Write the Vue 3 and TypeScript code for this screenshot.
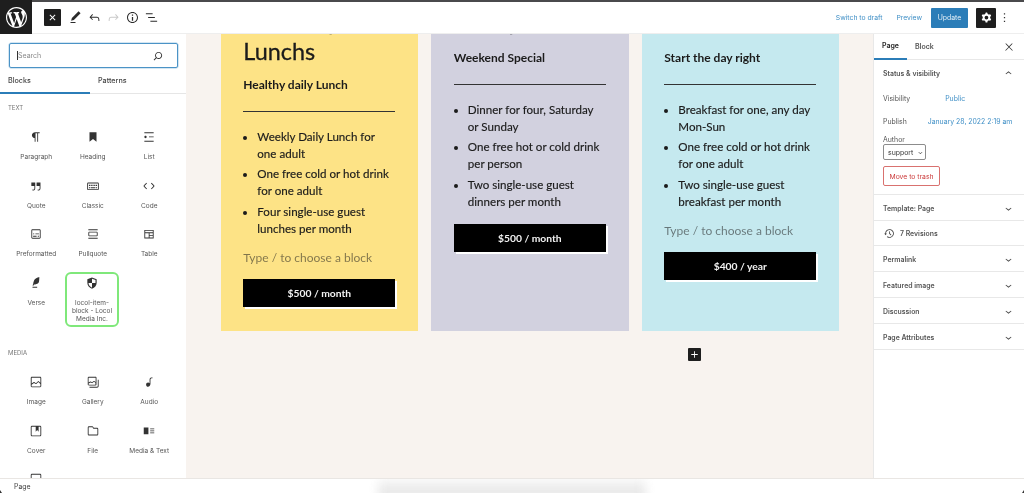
<template>
  <div class="editor">
    <header class="topbar">
      <div class="logo">
        <svg viewBox="0 0 20 20" width="21" height="21"><path fill="#fff" :d="icons.wp" /></svg>
      </div>
      <div class="tools">
        <button class="toggle">
          <svg viewBox="0 0 24 24" width="15" height="15"><path fill="#fff" :d="icons.closeSmall" /></svg>
        </button>
        <svg v-for="t in toolIcons" :key="t.d" viewBox="0 0 24 24" width="15" height="15" class="tool" :class="{ off: t.off }"><path :d="t.d" /></svg>
      </div>
      <div class="actions">
        <a class="link draft">Switch to draft</a>
        <a class="link preview">Preview</a>
        <button class="update">Update</button>
        <button class="settings">
          <svg viewBox="0 0 24 24" width="15" height="15"><path fill="#fff" fill-rule="evenodd" :d="icons.cog" /></svg>
        </button>
        <svg viewBox="0 0 24 24" width="15" height="15" class="kebab"><path :d="icons.kebab" /></svg>
      </div>
    </header>

    <div class="body">
      <aside class="inserter">
        <div class="search">
          <span class="caret"></span>
          <span class="search-text">Search</span>
          <svg viewBox="0 0 24 24" width="14" height="14"><path fill="#333" :d="icons.search" /></svg>
        </div>
        <div class="ins-tabs">
          <span class="ins-tab active">Blocks</span>
          <span class="ins-tab">Patterns</span>
        </div>
        <section v-for="group in blockGroups" :key="group.title">
          <h3 class="group-title">{{ group.title }}</h3>
          <div class="block-grid">
            <div v-for="b in group.items" :key="b.label" class="block" :class="{ picked: b.picked }">
              <svg viewBox="0 0 24 24" width="14" height="14" class="block-icon"><path fill-rule="evenodd" :d="b.icon" /></svg>
              <span class="block-label">{{ b.label }}</span>
            </div>
          </div>
        </section>
      </aside>

      <main class="canvas">
        <div class="cards">
          <article v-for="plan in plans" :key="plan.sub" class="card" :class="plan.tone">
            <h2 class="plan-title">{{ plan.title }}</h2>
            <p class="plan-sub">{{ plan.sub }}</p>
            <hr class="rule" />
            <ul class="perks">
              <li v-for="perk in plan.perks" :key="perk">{{ perk }}</li>
            </ul>
            <p v-if="plan.hint" class="hint">Type / to choose a block</p>
            <div class="price">{{ plan.price }}</div>
          </article>
        </div>
        <button class="appender">
          <svg viewBox="0 0 24 24" width="13" height="13"><path fill="#fff" :d="icons.plus" /></svg>
        </button>
      </main>

      <aside class="sidebar">
        <div class="side-tabs">
          <span class="side-tab active">Page</span>
          <span class="side-tab">Block</span>
          <svg viewBox="0 0 24 24" width="12" height="12" class="side-close"><path :d="icons.close" /></svg>
        </div>
        <section class="status">
          <div class="panel-head flush">
            <span>Status &amp; visibility</span>
            <svg viewBox="0 0 24 24" width="13" height="13"><path :d="icons.chevronUp" /></svg>
          </div>
          <div class="row visibility"><span>Visibility</span><a class="val public">Public</a></div>
          <div class="row publish"><span>Publish</span><a class="val date">January 28, 2022 2:19 am</a></div>
          <div class="author">Author</div>
          <div class="select">support
            <svg viewBox="0 0 24 24" width="9" height="9"><path :d="icons.chevronDown" /></svg>
          </div>
          <button class="trash">Move to trash</button>
        </section>
        <div class="panel-head template">
          <span>Template: Page</span>
          <svg viewBox="0 0 24 24" width="13" height="13"><path :d="icons.chevronDown" /></svg>
        </div>
        <div class="revisions">
          <svg viewBox="0 0 24 24" width="13" height="13"><path :d="icons.backup" /></svg>
          <span>7 Revisions</span>
        </div>
        <div v-for="p in panels" :key="p" class="panel-head">
          <span>{{ p }}</span>
          <svg viewBox="0 0 24 24" width="13" height="13"><path :d="icons.chevronDown" /></svg>
        </div>
      </aside>
    </div>

    <footer class="crumbs">
      <span>Page</span>
      <i class="smudge"></i>
      <i class="corner left"></i>
      <i class="corner right"></i>
    </footer>
  </div>
</template>

<script setup lang="ts">
interface Block {
  label: string
  icon: string
  picked?: boolean
}

interface Plan {
  title: string
  sub: string
  perks: string[]
  price: string
  tone: string
  hint?: boolean
}

const icons = {
  wp: 'M20 10c0-5.51-4.49-10-10-10C4.48 0 0 4.49 0 10c0 5.52 4.48 10 10 10 5.51 0 10-4.48 10-10zM7.78 15.37L4.37 6.22c.55-.02 1.17-.08 1.17-.08.5-.06.44-1.13-.06-1.11 0 0-1.45.11-2.37.11-.18 0-.37 0-.58-.01C4.12 2.69 6.87 1.11 10 1.11c2.33 0 4.45.87 6.05 2.34-.68-.11-1.65.39-1.65 1.58 0 .74.45 1.36.9 2.1.35.61.55 1.36.55 2.46 0 1.49-1.4 5-1.4 5l-3.03-8.37c.54-.02.82-.17.82-.17.5-.05.44-1.25-.06-1.22 0 0-1.44.12-2.38.12-.87 0-2.33-.12-2.33-.12-.5-.03-.56 1.2-.06 1.22l.92.08 1.26 3.41zM17.41 10c.24-.64.74-1.87.43-4.25.7 1.29 1.05 2.71 1.05 4.25 0 3.29-1.73 6.24-4.4 7.78.97-2.59 1.94-5.2 2.92-7.78zM6.1 18.09C3.12 16.65 1.11 13.53 1.11 10c0-1.3.23-2.48.72-3.59C3.25 10.3 4.67 14.2 6.1 18.09zm4.03-6.63l2.58 6.98c-.86.29-1.76.45-2.71.45-.79 0-1.57-.11-2.29-.33.81-2.38 1.62-4.74 2.42-7.1z',
  closeSmall: 'M12 13.06l3.712 3.713 1.061-1.06L13.061 12l3.712-3.712-1.06-1.06L12 10.938 8.288 7.227l-1.061 1.06L10.939 12l-3.712 3.712 1.06 1.061L12 13.061z',
  close: 'M13 11.8l6.1-6.3-1-1-6.1 6.2-6.1-6.2-1 1 6.1 6.3-6.5 6.7 1 1 6.5-6.6 6.5 6.6 1-1z',
  cog: 'M10.289 4.836A1 1 0 0 1 11.275 4h1.306a1 1 0 0 1 .987.836l.244 1.466c.787.26 1.503.679 2.108 1.218l1.393-.522a1 1 0 0 1 1.216.437l.653 1.13a1 1 0 0 1-.23 1.273l-1.148.944a6.025 6.025 0 0 1 0 2.435l1.149.946a1 1 0 0 1 .23 1.272l-.653 1.13a1 1 0 0 1-1.216.437l-1.394-.522c-.605.54-1.32.958-2.108 1.218l-.244 1.466a1 1 0 0 1-.987.836h-1.306a1 1 0 0 1-.986-.836l-.244-1.466a5.995 5.995 0 0 1-2.108-1.218l-1.394.522a1 1 0 0 1-1.217-.436l-.653-1.131a1 1 0 0 1 .23-1.272l1.149-.946a6.026 6.026 0 0 1 0-2.435l-1.148-.944a1 1 0 0 1-.23-1.272l.653-1.131a1 1 0 0 1 1.217-.437l1.393.522a5.994 5.994 0 0 1 2.108-1.218l.244-1.466ZM14.929 12a3 3 0 1 1-6 0 3 3 0 0 1 6 0Z',
  kebab: 'M13 19h-2v-2h2v2zm0-6h-2v-2h2v2zm0-6h-2V5h2v2z',
  search: 'M13 5c-3.3 0-6 2.7-6 6 0 1.4.5 2.7 1.3 3.7l-3.8 3.8 1.1 1.1 3.8-3.8c1 .8 2.3 1.3 3.7 1.3 3.3 0 6-2.7 6-6S16.3 5 13 5zm0 10.5c-2.5 0-4.5-2-4.5-4.5s2-4.5 4.5-4.5 4.5 2 4.5 4.5-2 4.5-4.5 4.5z',
  plus: 'M18 11.2h-5.2V6h-1.6v5.2H6v1.6h5.2V18h1.6v-5.2H18z',
  chevronDown: 'M17.5 11.6L12 16l-5.5-4.4.9-1.2L12 14l4.5-3.6 1 1.2z',
  chevronUp: 'M6.5 12.4L12 8l5.5 4.4-.9 1.2L12 10l-4.5 3.6-1-1.2z',
  backup: 'M5.5 12h1.75l-2.5 3-2.5-3H4a8 8 0 113.134 6.35l.907-1.194A6.5 6.5 0 105.5 12zm9.53 1.97l-2.28-2.28V8.5a.75.75 0 00-1.5 0V12a.747.747 0 00.218.529l1.282-.84-1.28.842 2.5 2.5a.75.75 0 101.06-1.061z',
}

const toolIcons = [
  { d: 'M20.1 5.1L16.9 2 6.2 12.7l-1.3 4.4 4.5-1.3L20.1 5.1zM4 20.8h8v-1.5H4v1.5z' },
  { d: 'M18.3 11.7c-.6-.6-1.4-.9-2.3-.9H6.7l2.9-3.3-1.1-1-4.5 5L8.5 16l1-1-2.7-2.7H16c.5 0 .9.2 1.3.5 1 1 1 3.4 1 4.5v.3h1.5v-.2c0-1.5 0-4.3-1.5-5.7z' },
  { d: 'M15.6 6.5l-1.1 1 2.9 3.3H8c-.9 0-1.7.3-2.3.9-1.4 1.5-1.4 4.2-1.4 5.6v.2h1.5v-.3c0-1.1 0-3.5 1-4.5.3-.3.7-.5 1.3-.5h9.2L14.5 15l1.1 1.1 4.6-4.6-4.6-5z', off: true },
  { d: 'M12 3.2c-4.8 0-8.8 3.9-8.8 8.8 0 4.8 3.9 8.8 8.8 8.8 4.8 0 8.8-3.9 8.8-8.8 0-4.8-4-8.8-8.8-8.8zm0 16c-4 0-7.2-3.3-7.2-7.2C4.8 8 8 4.8 12 4.8s7.2 3.3 7.2 7.2c0 4-3.2 7.2-7.2 7.2zM11 17h2v-6h-2v6zm0-8h2V7h-2v2z' },
  { d: 'M13.8 5.2H3v1.5h10.8V5.2zm-3.6 12v1.5H21v-1.5H10.2zm7.2-6H6.6v1.5h10.8v-1.5z' },
]

const blockGroups: { title: string; items: Block[] }[] = [
  {
    title: 'TEXT',
    items: [
      { label: 'Paragraph', icon: 'M18.3 4H9.9v-.1l-.9.2c-2.3.4-4 2.4-4 4.8s1.7 4.4 4 4.8l.7.1V20h1.5V5.5h2.9V20h1.5V5.5h2.7V4z' },
      { label: 'Heading', icon: 'M6 4h12v16l-6-4.5L6 20z' },
      { label: 'List', icon: 'M4 4v1.5h16V4H4zm8 8.5h8V11h-8v1.5zM4 20h16v-1.5H4V20zm4-8c0-1.1-.9-2-2-2s-2 .9-2 2 .9 2 2 2 2-.9 2-2z' },
      { label: 'Quote', icon: 'M13 6v6h5.2v4c0 .8-.2 1.4-.5 1.7-.6.6-1.6.6-2.5.5h-.3v1.5h.5c1 0 2.3-.1 3.3-1 .6-.6 1-1.6 1-2.8V6H13zm-9 6h5.2v4c0 .8-.2 1.4-.5 1.7-.6.6-1.6.6-2.5.5h-.3v1.5h.5c1 0 2.3-.1 3.3-1 .6-.6 1-1.6 1-2.8V6H4v6z' },
      { label: 'Classic', icon: 'M20 6H4c-1.1 0-2 .9-2 2v9c0 1.1.9 2 2 2h16c1.1 0 2-.9 2-2V8c0-1.1-.9-2-2-2zm.5 11c0 .3-.2.5-.5.5H4c-.3 0-.5-.2-.5-.5V8c0-.3.2-.5.5-.5h16c.3 0 .5.2.5.5v9zM10 10H8v2h2v-2zm-5 2h2v-2H5v2zm8-2h-2v2h2v-2zm-5 6h8v-2H8v2zm6-4h2v-2h-2v2zm3 0h2v-2h-2v2zm0 4h2v-2h-2v2zM5 16h2v-2H5v2z' },
      { label: 'Code', icon: 'M20.8 10.7l-4.3-4.3-1.1 1.1 4.3 4.3c.1.1.1.3 0 .4l-4.3 4.3 1.1 1.1 4.3-4.3c.7-.8.7-1.9 0-2.6zM4.2 11.8l4.3-4.3-1-1-4.3 4.3c-.7.7-.7 1.8 0 2.5l4.3 4.3 1.1-1.1-4.3-4.3c-.2-.1-.2-.3-.1-.4z' },
      { label: 'Preformatted', icon: 'M18 4H6c-1.1 0-2 .9-2 2v12c0 1.1.9 2 2 2h12c1.1 0 2-.9 2-2V6c0-1.1-.9-2-2-2zm.5 14c0 .3-.2.5-.5.5H6c-.3 0-.5-.2-.5-.5V6c0-.3.2-.5.5-.5h12c.3 0 .5.2.5.5v12zM7 16.5h6V15H7v1.5zm4-4h6V11h-6v1.5zM9 11H7v1.5h2V11zm6 5.5h2V15h-2v1.5z' },
      { label: 'Pullquote', icon: 'M18 8H6c-1.1 0-2 .9-2 2v4c0 1.1.9 2 2 2h12c1.1 0 2-.9 2-2v-4c0-1.1-.9-2-2-2zm.5 6c0 .3-.2.5-.5.5H6c-.3 0-.5-.2-.5-.5v-4c0-.3.2-.5.5-.5h12c.3 0 .5.2.5.5v4zM4 4v1.5h16V4H4zm0 16h16v-1.5H4V20z' },
      { label: 'Table', icon: 'M4 5v14.5h16V5H4zm1.5 1.5h13V9h-13V6.5zm0 4h6V18h-6v-7.5zm7.5 7.5v-7.5h5.5V18H13zm0-4h5.5v1.5H13z' },
      { label: 'Verse', icon: 'M17.8 2l-.9.3c-.1 0-3.6 1-5.2 2.1C10 5.5 9.3 6.5 8.9 7.1c-.6.9-1.7 4.7-1.7 6.3l-.9 2.3c-.2.4 0 .8.4 1 .1 0 .2.1.3.1.3 0 .6-.2.7-.5l.6-1.5c.3 0 .7-.1 1.2-.2.7-.1 1.4-.3 2.2-.5.8-.2 1.6-.5 2.4-.8.7-.3 1.4-.7 1.9-1.2s.8-1.2 1-1.9c.2-.7.3-1.6.4-2.4.1-.8.1-1.7.2-2.5 0-.8.1-1.5.2-2.1V2zM6 20h8v-1.5H6V20z' },
      { label: 'locol-item-block - Locol Media Inc.', picked: true, icon: 'M12 2.5l8 3v6c0 5-3.4 8.6-8 10.5-4.6-1.9-8-5.5-8-10.5v-6l8-3zm0 2v7.5H6c0 3.7 2.6 6.5 6 8v-8h6V6.8l-6-2.3z' },
    ],
  },
  {
    title: 'MEDIA',
    items: [
      { label: 'Image', icon: 'M19 3H5c-1.1 0-2 .9-2 2v14c0 1.1.9 2 2 2h14c1.1 0 2-.9 2-2V5c0-1.1-.9-2-2-2zM5 4.5h14c.3 0 .5.2.5.5v8.4l-3-2.9c-.3-.3-.8-.3-1 0L11.9 14 9 12c-.3-.2-.6-.2-.8 0l-3.6 2.6V5c-.1-.3.1-.5.4-.5zm14 15H5c-.3 0-.5-.2-.5-.5v-2.4l4.1-3 3 1.9c.3.2.7.2.9-.1L16 12l3.5 3.4V19c0 .3-.2.5-.5.5z' },
      { label: 'Gallery', icon: 'M20.2 8v11c0 .7-.6 1.2-1.2 1.2H6v1.5h13c1.5 0 2.7-1.2 2.7-2.8V8h-1.5zM18 16.4V4.6c0-.9-.7-1.6-1.6-1.6H4.6C3.7 3 3 3.7 3 4.6v11.8c0 .9.7 1.6 1.6 1.6h11.8c.9 0 1.6-.7 1.6-1.6zM4.5 4.6c0-.1.1-.1.1-.1h11.8c.1 0 .1.1.1.1V12l-2.3-1.7c-.3-.2-.6-.2-.9 0l-2.9 2.1L8 11.3c-.2-.1-.5-.1-.7 0l-2.9 1.5V4.6zm.1 11.9c-.1 0-.1-.1-.1-.1v-2l3.2-1.7 2.4 1.2c.2.1.5.1.8-.1l2.9-2.1 2.3 1.7v3c0 .1-.1.1-.1.1H4.6z' },
      { label: 'Audio', icon: 'M17.7 4.3c-1.2 0-2.8 0-3.8 1-.6.6-.9 1.5-.9 2.6V14c-.6-.6-1.5-1-2.5-1C8.6 13 7 14.6 7 16.5S8.6 20 10.5 20c1.5 0 2.8-1 3.3-2.3.5-.8.7-1.8.7-2.5V7.9c0-.7.2-1.2.5-1.6.6-.6 1.8-.6 2.8-.6h.3V4.3h-.4z' },
      { label: 'Cover', icon: 'M18.7 3H5.3C4 3 3 4 3 5.3v13.4C3 20 4 21 5.3 21h13.4c1.3 0 2.3-1 2.3-2.3V5.3C21 4 20 3 18.7 3zm.8 15.7c0 .4-.4.8-.8.8H5.3c-.4 0-.8-.4-.8-.8V5.3c0-.4.4-.8.8-.8h6.2v8.9l2.5-3.1 2.5 3.1V4.5h2.2c.4 0 .8.4.8.8v13.4z' },
      { label: 'File', icon: 'M12.848 8a1 1 0 0 1-.914-.594l-.723-1.63a.5.5 0 0 0-.447-.276H5a.5.5 0 0 0-.5.5v11.5a.5.5 0 0 0 .5.5h14a.5.5 0 0 0 .5-.5v-9A.5.5 0 0 0 19 8h-6.152Zm.612-1.5a.5.5 0 0 1-.462-.31l-.445-1.084A2 2 0 0 0 10.763 4H5a2 2 0 0 0-2 2v11.5a2 2 0 0 0 2 2h14a2 2 0 0 0 2-2v-9a2 2 0 0 0-2-2h-5.54Z' },
      { label: 'Media & Text', icon: 'M3 6v11.5h8V6H3Zm11 3h7V7.5h-7V9Zm7 3.5h-7V11h7v1.5ZM14 16h7v-1.5h-7V16Z' },
      { label: 'Video', icon: 'M18.7 3H5.3C4 3 3 4 3 5.3v13.4C3 20 4 21 5.3 21h13.4c1.3 0 2.3-1 2.3-2.3V5.3C21 4 20 3 18.7 3zm.8 15.7c0 .4-.4.8-.8.8H5.3c-.4 0-.8-.4-.8-.8V5.3c0-.4.4-.8.8-.8h13.4c.4 0 .8.4.8.8v13.4z' },
    ],
  },
]

const plans: Plan[] = [
  {
    title: 'Weekday Lunchs',
    sub: 'Healthy daily Lunch',
    perks: ['Weekly Daily Lunch for one adult', 'One free cold or hot drink for one adult', 'Four single-use guest lunches per month'],
    price: '$500 / month',
    tone: 'yellow',
    hint: true,
  },
  {
    title: 'Family',
    sub: 'Weekend Special',
    perks: ['Dinner for four, Saturday or Sunday', 'One free hot or cold drink per person', 'Two single-use guest dinners per month'],
    price: '$500 / month',
    tone: 'lavender short',
  },
  {
    title: 'Breakfast',
    sub: 'Start the day right',
    perks: ['Breakfast for one, any day Mon-Sun', 'One free cold or hot drink for one adult', 'Two single-use guest breakfast per month'],
    price: '$400 / year',
    tone: 'aqua short',
    hint: true,
  },
]

const panels = ['Permalink', 'Featured image', 'Discussion', 'Page Attributes']
</script>

<style>
html,
body {
  margin: 0;
  overflow: hidden;
}
</style>

<style scoped>
.editor {
  width: 1024px;
  height: 493px;
  display: flex;
  flex-direction: column;
  overflow: hidden;
  background: #fff;
  font-family: Inter, "Liberation Sans", sans-serif;
  color: #1e1e1e;
  filter: blur(0.35px);
}

button {
  border: 0;
  padding: 0;
  font: inherit;
}

/* top bar */
.topbar {
  height: 34px;
  flex: none;
  box-sizing: border-box;
  display: flex;
  align-items: center;
  border-top: 2px solid #4a4a4c;
  border-bottom: 1px solid #eeeeee;
}

.logo {
  width: 32px;
  height: 34px;
  margin: -2px 0 -1px;
  background: #1e1e1e;
  display: flex;
  align-items: center;
  justify-content: center;
}

.tools {
  display: flex;
  align-items: center;
  gap: 4px;
  margin-left: 12px;
}

.toggle {
  width: 17px;
  height: 17px;
  border-radius: 1px;
  background: #1e1e1e;
  display: flex;
  align-items: center;
  justify-content: center;
  margin-right: 3px;
}

.tool {
  fill: #2b2b2b;
}

.tool.off {
  fill: #c9c9c9;
}

.actions {
  margin-left: auto;
  display: flex;
  align-items: center;
  font-size: 6.8px;
}

.link {
  color: #3f8fc6;
}

.preview {
  margin-left: 14px;
}

.update {
  width: 37px;
  height: 20px;
  margin-left: 9px;
  background: #2b7db8;
  color: #e6f1f8;
  font-size: 6.9px;
  border-radius: 1px;
}

.settings {
  width: 20px;
  height: 20px;
  margin-left: 8px;
  background: #1e1e1e;
  border-radius: 1px;
  display: flex;
  align-items: center;
  justify-content: center;
}

.kebab {
  margin: 0 12px 0 1px;
  fill: #333;
}

.body {
  flex: 1;
  min-height: 0;
  display: flex;
}

/* block inserter */
.inserter {
  width: 186px;
  flex: none;
  overflow: hidden;
  background: #fff;
}

.search {
  height: 25px;
  box-sizing: border-box;
  margin: 9px 8px 0 9px;
  padding: 0 12px 0 7px;
  display: flex;
  align-items: center;
  border: 1px solid #4b93c6;
  border-radius: 2px;
  box-shadow: 0 0 0 0.5px #a9cde6;
  font-size: 7px;
  color: #8a8a8a;
}

.caret {
  width: 1px;
  height: 9px;
  background: #333;
}

.search-text {
  flex: 1;
}

.ins-tabs {
  display: flex;
  height: 25px;
  border-bottom: 1px solid #e6e6e6;
}

.ins-tab {
  width: 90px;
  box-sizing: border-box;
  display: flex;
  align-items: center;
  padding-left: 8px;
  font-size: 7.2px;
  font-weight: 500;
  color: #444;
}

.ins-tab + .ins-tab {
  padding: 0 0 0 8px;
}

.ins-tab.active {
  border-bottom: 2px solid #2b7db8;
  height: 26px;
}

.group-title {
  margin: 0;
  padding: 8px 8px 0;
  height: 12px;
  font-size: 6px;
  line-height: 12px;
  font-weight: 400;
  color: #777;
}

.block-grid {
  display: grid;
  grid-template-columns: repeat(3, 56.5px);
  grid-auto-rows: 48.5px;
  padding: 12px 8px 6px;
}

section + section .group-title {
  padding-top: 21px;
}

.block {
  height: 48.5px;
  box-sizing: border-box;
  padding-top: 4px;
  display: flex;
  flex-direction: column;
  align-items: center;
  text-align: center;
}

.block-icon {
  fill: #333;
  flex: none;
}

.block-label {
  margin-top: 9px;
  font-size: 6.5px;
  line-height: 8px;
  color: #555;
  white-space: nowrap;
}

.block.picked {
  height: 55.5px;
  margin: 0 2px 0 0.5px;
  border: 2px solid #7fe87a;
  border-radius: 6px;
  padding: 2px 2px 0;
}

.block.picked .block-label {
  white-space: normal;
  margin-top: 9.5px;
}

/* canvas */
.canvas {
  flex: 1;
  min-width: 0;
  background: #f8f3ef;
  padding: 0 34px 0 34.8px;
  overflow: hidden;
}

.cards {
  margin-top: -47px;
  display: grid;
  grid-template-columns: repeat(3, 197.5px);
  column-gap: 13px;
}

.card {
  padding: 19px 23px 23.5px 22.5px;
  color: #1b1b1b;
  font-family: Lato, Inter, sans-serif;
}

.yellow {
  background: #fde386;
}

.lavender {
  background: #d2d1df;
}

.aqua {
  background: #c5e9ef;
}

.plan-title {
  margin: 0;
  font-size: 23.4px;
  line-height: 30px;
  font-weight: 400;
  -webkit-text-stroke: 0.3px #1b1b1b;
  width: 120px;
}

.plan-sub {
  margin: 10px 0 0;
  font-size: 12px;
  line-height: 18px;
  font-weight: 700;
}

.short .plan-sub {
  margin-top: 13px;
}

.rule {
  margin: 17px 0 0;
  height: 1px;
  border: 0;
  background: #333;
}

.perks {
  margin: 17px 0 0;
  padding: 0 3px 0 14px;
  font-size: 11.6px;
  line-height: 16.7px;
  -webkit-text-stroke: 0.15px #1b1b1b;
}

.perks li + li {
  margin-top: 4px;
}

.hint {
  margin: 11.5px 0 0;
  font-size: 12px;
  line-height: 17px;
  color: #1b1b1b;
  opacity: 0.55;
}

.price {
  height: 28px;
  margin-top: 13.5px;
  background: #000;
  color: #f2f2f2;
  font-size: 10.3px;
  font-weight: 700;
  display: flex;
  align-items: center;
  justify-content: center;
  box-shadow: 2px 2px 0 #fff;
}

.appender {
  display: flex;
  width: 13px;
  height: 13px;
  margin: 17px 0 0 467px;
  background: #1e1e1e;
  border-radius: 1px;
}

/* settings sidebar */
.sidebar {
  width: 151px;
  flex: none;
  box-sizing: border-box;
  border-left: 1px solid #e8e8e8;
  background: #fff;
  font-size: 6.9px;
  color: #555;
}

.side-tabs {
  display: flex;
  height: 26px;
  box-sizing: border-box;
  align-items: center;
  border-bottom: 1px solid #e8e8e8;
  position: relative;
  font-weight: 600;
  font-size: 7px;
}

.side-tab {
  height: 26px;
  box-sizing: border-box;
  display: flex;
  align-items: center;
  padding: 0 8px;
}

.side-tab.active {
  color: #222;
  border-bottom: 2px solid #2b7db8;
  width: 33px;
}

.side-close {
  margin-left: auto;
  margin-right: 9px;
  fill: #333;
}

.panel-head {
  height: 26px;
  box-sizing: border-box;
  display: flex;
  align-items: center;
  justify-content: space-between;
  padding: 2px 9px 0;
  font-weight: 600;
  color: #555;
  border-bottom: 1px solid #e8e8e8;
}

.panel-head svg {
  fill: #444;
}

.panel-head.flush {
  border: 0;
  padding-top: 0;
}

.status {
  height: 135px;
  box-sizing: border-box;
  border-bottom: 1px solid #e8e8e8;
}

.row {
  display: flex;
  padding: 0 9px;
  height: 23px;
  align-items: center;
  position: relative;
  top: 1px;
}

.val {
  color: #3f8fc6;
}

.public {
  margin-left: 35px;
}

.date {
  margin-left: 21px;
  white-space: nowrap;
}

.author {
  padding: 0 9px;
  margin-top: 3px;
  line-height: 9px;
}

.select {
  width: 43px;
  height: 16px;
  box-sizing: border-box;
  margin: 0 0 0 9px;
  padding-left: 4px;
  display: flex;
  align-items: center;
  gap: 3px;
  border: 1px solid #8c8c8c;
  border-radius: 2px;
  color: #333;
}

.select svg {
  fill: #333;
}

.trash {
  display: block;
  width: 57px;
  height: 20px;
  margin: 6px 0 0 9px;
  border: 1px solid #d9716f;
  border-radius: 2px;
  background: #fff;
  color: #cc3b3b;
  font-size: 6.8px;
}

.revisions {
  height: 25px;
  box-sizing: border-box;
  display: flex;
  align-items: center;
  gap: 4px;
  padding: 1px 0 0 9px;
  font-weight: 600;
  border-bottom: 1px solid #e8e8e8;
}

.revisions svg {
  fill: #444;
}

/* breadcrumb bar */
.crumbs {
  height: 15px;
  flex: none;
  box-sizing: border-box;
  display: flex;
  align-items: center;
  padding-left: 14px;
  border-top: 1px solid #e9e6e3;
  background: #fff;
  font-size: 6.9px;
  color: #444;
  position: relative;
  overflow: hidden;
}

.smudge {
  position: absolute;
  left: 378px;
  width: 268px;
  top: 0;
  height: 20px;
  background: linear-gradient(#f6f6f6, #e2e2e2);
  filter: blur(5px);
}

.corner {
  position: absolute;
  bottom: 0;
  width: 0;
  height: 0;
  border-bottom: 3px solid #333;
}

.corner.left {
  left: 0;
  border-right: 2px solid transparent;
}

.corner.right {
  right: 0;
  border-left: 2px solid transparent;
}
</style>
